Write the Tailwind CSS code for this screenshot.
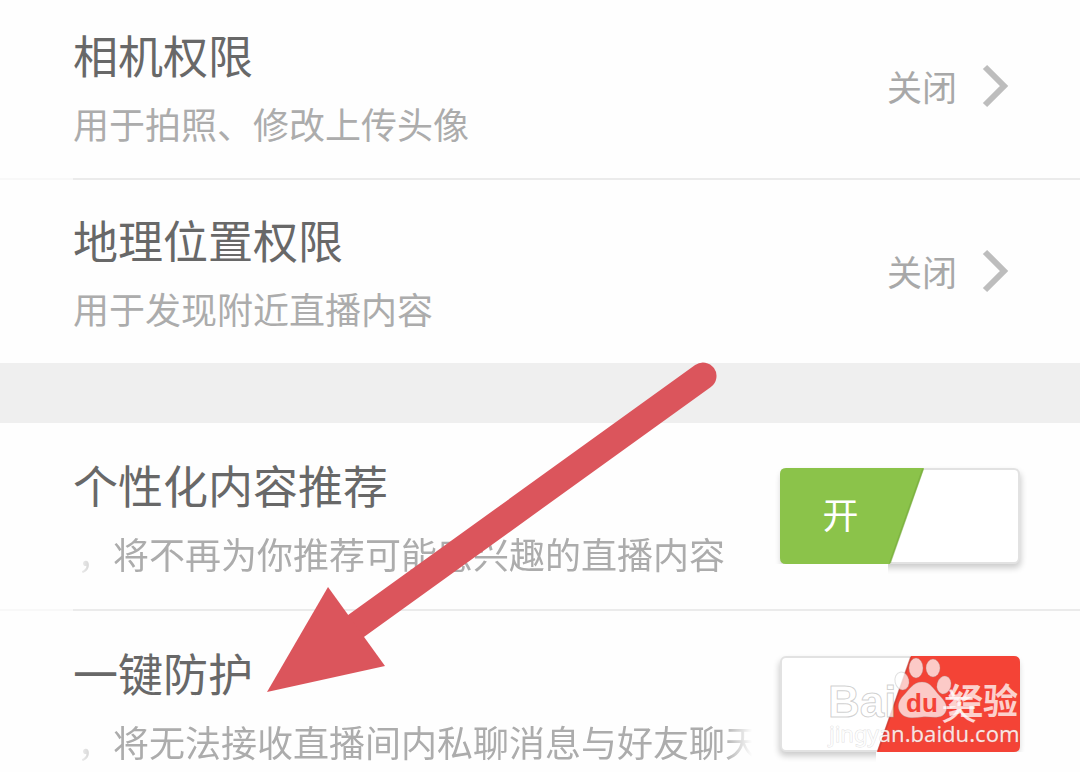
<!DOCTYPE html>
<html lang="zh-CN">
<head>
<meta charset="utf-8">
<meta name="viewport" content="width=device-width, initial-scale=1">
<title>权限设置</title>
<script src="https://cdn.jsdelivr.net/npm/@tailwindcss/browser@4"></script>
</head>
<body class="bg-[#fefefe] font-['Noto_Sans_CJK_SC',sans-serif] text-[#686868]">
<main class="relative flex h-screen flex-col overflow-hidden">

  <a href="#camera" class="flex shrink-0 items-center justify-between pt-[21px] pr-[71px] pb-[21px] pl-[73px]">
    <span class="flex flex-col">
      <span class="text-[45px] leading-[68px]">相机权限</span>
      <span class="text-[36px] leading-[68px] text-[#acacac]">用于拍照、修改上传头像</span>
    </span>
    <span class="flex items-center gap-6 pb-1.5 text-[35px] leading-[48px] text-[#a8a8a8]">
      关闭
      <svg class="h-[44px] w-[28px]" viewBox="0 0 28 44" fill="none" stroke="#bdbdbd" stroke-width="6" aria-hidden="true"><path d="M4 3 23 22 4 41"/></svg>
    </span>
  </a>
  <div class="flex h-[2px] shrink-0"><div class="w-[73px] bg-[#f8f8f8]"></div><div class="flex-1 bg-[#ebebeb]"></div></div>

  <a href="#location" class="flex shrink-0 items-center justify-between pt-[26px] pr-[71px] pb-[21px] pl-[73px]">
    <span class="flex flex-col">
      <span class="text-[45px] leading-[68px]">地理位置权限</span>
      <span class="text-[36px] leading-[68px] text-[#acacac]">用于发现附近直播内容</span>
    </span>
    <span class="flex items-center gap-6 pb-1.5 text-[35px] leading-[48px] text-[#a8a8a8]">
      关闭
      <svg class="h-[44px] w-[28px]" viewBox="0 0 28 44" fill="none" stroke="#bdbdbd" stroke-width="6" aria-hidden="true"><path d="M4 3 23 22 4 41"/></svg>
    </span>
  </a>
  <div class="h-[60px] shrink-0 bg-[#efefef]"></div>

  <div class="flex shrink-0 items-center gap-6 pt-7 pr-[60px] pb-[22px] pl-[73px]">
    <label for="recommend" class="flex min-w-0 flex-1 flex-col">
      <span class="text-[45px] leading-[68px]">个性化内容推荐</span>
      <span class="overflow-hidden pl-1 text-[36px] leading-[68px] whitespace-nowrap text-[#acacac] [mask-image:linear-gradient(to_right,transparent,black_36px,black_calc(100%-30px),transparent)]">，将不再为你推荐可能感兴趣的直播内容</span>
    </label>
    <span class="relative mb-1.5 h-24 w-60 shrink-0">
      <input id="recommend" type="checkbox" checked class="block h-24 w-60 appearance-none rounded-md border-2 border-[#e2e2e2] bg-white shadow-[1px_4px_6px_rgba(0,0,0,0.2)]">
      <!-- Cover the shadow under the coloured half, which lies flat -->
      <span class="pointer-events-none absolute -left-2 -bottom-4 h-4 w-[116px] bg-[#fefefe]"></span>
      <svg class="pointer-events-none absolute inset-0 h-24 w-60" viewBox="0 0 240 96" aria-hidden="true"><path d="M6 0H144L110 96H6Q0 96 0 90V6Q0 0 6 0z" fill="#8bc34a"/><path d="M143 1 110 95" stroke="#6fa338" stroke-opacity=".5" stroke-width="2"/></svg>
      <span class="pointer-events-none absolute inset-y-0 left-0 flex w-[121px] items-center justify-center pb-1.5 text-[36px] leading-none text-white">开</span>
    </span>
  </div>
  <div class="flex h-[2px] shrink-0"><div class="w-[73px] bg-[#f8f8f8]"></div><div class="flex-1 bg-[#ebebeb]"></div></div>

  <div class="flex shrink-0 items-center gap-6 pt-7 pr-[60px] pb-[21px] pl-[73px]">
    <label for="protect" class="flex min-w-0 flex-1 flex-col">
      <span class="text-[45px] leading-[68px]">一键防护</span>
      <span class="overflow-hidden pl-1 text-[36px] leading-[68px] whitespace-nowrap text-[#acacac] [mask-image:linear-gradient(to_right,transparent,black_36px,black_calc(100%-32px),transparent_calc(100%-4px))]">，将无法接收直播间内私聊消息与好友聊天</span>
    </label>
    <span class="relative mb-1.5 h-24 w-60 shrink-0">
      <input id="protect" type="checkbox" class="block h-24 w-60 appearance-none rounded-md border-2 border-[#e2e2e2] bg-white shadow-[-1px_4px_6px_rgba(0,0,0,0.2)]">
      <span class="pointer-events-none absolute -right-2 -bottom-4 h-4 w-[152px] bg-[#fefefe]"></span>
      <svg class="pointer-events-none absolute inset-0 h-24 w-60" viewBox="0 0 240 96" aria-hidden="true"><path d="M131 0H234Q240 0 240 6V90Q240 96 234 96H97z" fill="#f44336"/><path d="M131 1 98 95" stroke="#b83a30" stroke-opacity=".5" stroke-width="2"/></svg>
      <span class="pointer-events-none absolute inset-y-0 right-0 flex w-[122px] items-center justify-center text-[36px] leading-none text-white/80">关</span>

      <!-- Site watermark over the switch -->
      <svg class="pointer-events-none absolute top-0 left-[48px] h-24 w-[196px] overflow-visible" viewBox="0 0 196 96" aria-hidden="true">
        <g fill="#fff" fill-opacity=".72" stroke="#999" stroke-opacity=".3" stroke-width="1">
          <ellipse cx="88" cy="12" rx="7" ry="10"/>
          <ellipse cx="105" cy="12" rx="7" ry="9"/>
          <ellipse cx="74" cy="25" rx="7" ry="9" transform="rotate(-12 74 25)"/>
          <ellipse cx="116" cy="29" rx="7" ry="9" transform="rotate(15 116 29)"/>
          <path d="M94 26C85 26 81 34 76 39C70 45 69 51 72 56C76 63 85 62 94 61S112 64 117 57C121 51 117 45 111 39C106 34 103 26 94 26Z"/>
        </g>
        <g font-family="Liberation Sans, sans-serif" font-weight="700">
          <text x="0" y="61" font-size="44" fill="#fff" fill-opacity=".75" stroke="#999" stroke-opacity=".45" stroke-width="1">Bai</text>
          <text x="78" y="56" font-size="26" fill="#f44336">du</text>
        </g>
        <text x="120" y="58" font-size="35" font-weight="700" font-family="Noto Sans CJK SC, sans-serif" fill="#fff" fill-opacity=".75">经验</text>
        <text x="1" y="86" font-size="22" font-family="Noto Sans, sans-serif" fill="#fff" fill-opacity=".85" stroke="#999" stroke-opacity=".3" stroke-width="1" paint-order="stroke">jingyan.baidu.com</text>
      </svg>
    </span>
  </div>

  <!-- Pointer to the protection switch -->
  <svg class="pointer-events-none absolute top-[360px] left-[260px] h-[340px] w-[460px]" viewBox="260 360 460 340" aria-hidden="true">
    <path d="M703 376 356 626" stroke="#db555c" stroke-width="27" stroke-linecap="round"/>
    <path d="M267 692 328 587 385 666z" fill="#db555c"/>
  </svg>
</main>
</body>
</html>
